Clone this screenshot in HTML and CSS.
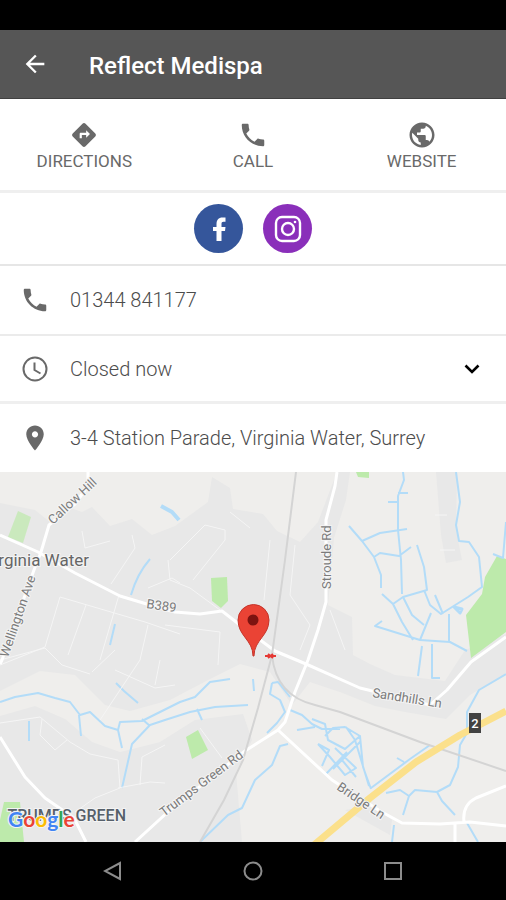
FILE: index.html
```html
<!DOCTYPE html>
<html lang="en">
<head>
    <meta charset="UTF-8">
    <meta name="viewport" content="width=device-width, initial-scale=1.0">
    <title>Reflect Medispa</title>
    <link rel="stylesheet" href="styles.css">
</head>
<body>
    <div class="statusbar"></div>
    <header class="toolbar">
        <button class="back" aria-label="Back">
            <svg width="28" height="28" viewBox="0 0 24 24" fill="currentColor"><path d="M20 11H7.83l5.59-5.59L12 4l-8 8 8 8 1.41-1.41L7.83 13H20v-2z"/></svg>
        </button>
        <h1>Reflect Medispa</h1>
    </header>
    <main>
        <nav class="actions">
            <a href="#map">
                <svg width="26" height="26" viewBox="0 0 24 24" fill="currentColor"><path d="M22.43 10.59l-9.01-9.01c-.75-.75-2.07-.76-2.83 0l-9 9c-.78.78-.78 2.04 0 2.82l9 9c.39.39.9.58 1.41.58.51 0 1.02-.19 1.41-.58l8.99-8.99c.79-.76.8-2.02.03-2.82zM14 14.5V12h-4v3H8v-4c0-.55.45-1 1-1h5V7.5l3.5 3.5-3.5 3.5z"/></svg>
                <span>DIRECTIONS</span>
            </a>
            <a href="tel:01344841177">
                <svg width="30" height="30" viewBox="0 0 24 24" fill="currentColor"><path d="M6.62 10.79c1.44 2.83 3.76 5.14 6.59 6.59l2.2-2.2c.27-.27.67-.36 1.02-.24 1.12.37 2.33.57 3.57.57.55 0 1 .45 1 1V20c0 .55-.45 1-1 1C10.61 21 3 13.39 3 4c0-.55.45-1 1-1h3.5c.55 0 1 .45 1 1 0 1.25.2 2.45.57 3.57.11.35.03.74-.25 1.02l-2.2 2.2z"/></svg>
                <span>CALL</span>
            </a>
            <a href="#website">
                <svg width="30" height="30" viewBox="0 0 24 24" fill="currentColor"><path d="M12 2C6.48 2 2 6.48 2 12s4.48 10 10 10 10-4.48 10-10S17.52 2 12 2zm-1 17.93c-3.95-.49-7-3.85-7-7.93 0-.62.08-1.21.21-1.79L9 15v1c0 1.1.9 2 2 2v1.93zm6.9-2.54c-.26-.81-1-1.39-1.9-1.39h-1v-3c0-.55-.45-1-1-1H8v-2h2c.55 0 1-.45 1-1V7h2c1.1 0 2-.9 2-2v-.41c2.93 1.19 5 4.06 5 7.41 0 2.08-.8 3.97-2.1 5.39z"/></svg>
                <span>WEBSITE</span>
            </a>
        </nav>
        <div class="social">
            <a href="#facebook" class="facebook" aria-label="Facebook">
                <svg width="26" height="26" viewBox="0 0 26 26" fill="#fff"><path d="M10.5 25V15H7v-4h3.5V8c0-4 2-6.5 6-6.5h3v4.3h-2c-1.5 0-2 .8-2 2.2v3h4l-.5 4h-3.5v10z"/></svg>
            </a>
            <a href="#instagram" class="instagram" aria-label="Instagram">
                <svg width="28" height="28" viewBox="0 0 28 28" fill="none" stroke="#fff" stroke-width="2.4"><rect x="2" y="2" width="24" height="24" rx="6"/><circle cx="14" cy="14" r="6"/><circle cx="21" cy="7" r="1.3" fill="#fff" stroke="none"/></svg>
            </a>
        </div>
        <a href="tel:01344841177" class="row">
            <svg width="30" height="30" viewBox="0 0 24 24" fill="currentColor"><path d="M6.62 10.79c1.44 2.83 3.76 5.14 6.59 6.59l2.2-2.2c.27-.27.67-.36 1.02-.24 1.12.37 2.33.57 3.57.57.55 0 1 .45 1 1V20c0 .55-.45 1-1 1C10.61 21 3 13.39 3 4c0-.55.45-1 1-1h3.5c.55 0 1 .45 1 1 0 1.25.2 2.45.57 3.57.11.35.03.74-.25 1.02l-2.2 2.2z"/></svg>
            <span>01344 841177</span>
        </a>
        <button class="row hours">
            <svg width="30" height="30" viewBox="0 0 30 30" fill="none" stroke="currentColor" stroke-width="2"><circle cx="15" cy="15" r="11.5"/><path d="M14.5 8.5V16l6 3.5"/></svg>
            <span>Closed now</span>
            <svg class="chevron" width="16" height="16" viewBox="0 0 16 16" fill="none" stroke="#000" stroke-width="2.6"><path d="M1.5 4.5L8 11l6.5-6.5"/></svg>
        </button>
        <a href="#map" class="row address">
            <svg width="30" height="30" viewBox="0 0 24 24" fill="currentColor"><path d="M12 2C8.13 2 5 5.13 5 9c0 5.25 7 13 7 13s7-7.75 7-13c0-3.87-3.13-7-7-7zm0 9.5c-1.38 0-2.5-1.12-2.5-2.5s1.12-2.5 2.5-2.5 2.5 1.12 2.5 2.5-1.12 2.5-2.5 2.5z"/></svg>
            <span>3-4 Station Parade, Virginia Water, Surrey</span>
        </a>
        <div class="map" id="map">
            <svg viewBox="0 472 506 370" preserveAspectRatio="xMidYMid slice">
                <!-- built up areas -->
                <g class="urban">
                    <path d="M0 503L35 510 50 522 68 507 82 512 92 507 110 526 132 519 152 535 175 526 208 502 212 477 230 488 233 509 263 514 277 531 300 542 318 522 337 472H350L346 500 334 538 328 605 352 617 353 655 370 664 395 675 445 681 465 650 506 634V673L470 695 446 719 405 712 375 706 340 692 310 682 292 705 270 672 240 664 212 678 170 700 130 711 105 705 75 675 40 671 0 691Z"/>
                    <path d="M0 716L35 706 65 719 92 742 120 752 160 742 195 720 243 714 252 740 236 772 242 842H0Z"/>
                    <path d="M436 472L457 472 456 530 462 560 446 563 441 535Z"/>
                    <path d="M345 810L372 805 392 820 390 835Z"/>
                </g>
                <g class="park">
                    <path d="M18 511L31 517 23 543 8 537Z" opacity=".7"/>
                    <path d="M211 578L227 577 228 601 221 608 212 601Z"/>
                    <path d="M356 472H369V478L358 477Z"/>
                    <path d="M497 556L506 559V632L471 658 466 615 482 594 485 577Z"/>
                    <path d="M186 737L198 730 208 750 192 759Z"/>
                    <path d="M4 802H20L24 842H0V820Z"/>
                </g>
                <g class="water">
                    <path d="M161 506L172 512 179 520" stroke-width="4"/>
                    <path d="M150 559Q137 574 131 595M115 624L110 645M116 683L124 691 138 703"/>
                    <path d="M0 702L15 697 38 693 55 698 70 702 80 715 90 712 105 726 118 730 122 748M79 715L81 736M29 721V741M118 730L120 722 142 721 180 702 195 697 210 682 230 679M122 788L132 744 150 725 165 720 190 712 215 707 248 705M197 709L202 720M142 719L150 726M253 679L254 691"/>
                    <path d="M272 683L278 682 290 697M272 683L270 694 280 700 285 712 277 723 267 733M288 744L280 746 272 765 255 780 242 808 228 815 200 842"/>
                    <path d="M403 472L404 480 398 496V530L401 560 402 594M388 502H398M398 493H408M349 526L362 541 374 557 381 575V588M362 541L380 533 407 529M374 557L380 553 399 556 411 547M417 545L424 567 427 590 403 597 393 604 382 594M393 604L402 622 413 640M403 597L412 615 424 625M424 590L430 605 441 614 468 597 482 587 479 557 469 542 459 541 456 525 460 502 456 472M435 595L443 614M431 613L420 640 375 626 382 621M420 640L450 642 467 651M449 614V642M422 646L418 676M432 644V678H440M506 522L503 558 493 554"/>
                    <path d="M290 710L302 715 312 724 322 729 340 729M297 730L315 727M312 719L325 724 328 740 345 749 360 736 345 727 333 728 325 736M318 744L329 750 322 766M318 744L330 757 345 775 356 768 335 748M333 769L360 742M360 736L363 767 371 789M346 727L355 740 362 763 369 786M325 775L347 752M342 760L356 777"/>
                    <path d="M371 788L410 759 430 745M397 758L404 762M386 793L400 790 409 796 415 790 437 792 450 785 458 767 460 745 467 733 467 712 479 690 506 674M409 796L403 815M437 792L442 801 455 815M467 823L478 842M394 825L392 842"/>
                    <path d="M454 607L462 609 460 613Z" stroke-width="3"/>
                </g>
                <g class="lane">
                    <path d="M60 597L145 622 180 634M60 597L45 647 0 665M86 605L68 655M119 595L100 660M148 625L140 660 100 720M82 531L85 548 110 541M111 584L135 548 132 535M148 588L172 578 180 583M168 560L170 580 190 588 220 610M193 580L225 540 225 530 205 525 170 560M230 512L250 528M270 540L264 600M0 660L45 648 62 665 90 674M92 672L115 650M115 670L155 688 175 685M155 685L160 660M165 625L220 632 218 665"/>
                    <path d="M0 723L40 717 70 742 90 754 118 760 120 788 95 798 75 812M42 719L40 735 55 750 67 740M118 788L150 782 165 783M165 745L142 757 140 785M200 728L222 758M295 545L290 595 310 625 300 650M330 610L345 650M435 515H447M440 550H455"/>
                </g>
                <g class="road">
                    <path d="M88 472V486L75 504 49 525 41 552 34 570 2 660 0 664"/>
                    <path d="M0 535L38 552 75 573 120 596 150 605 175 612 200 614 222 611 240 625 275 651 306 664 360 688 430 705 447 690 471 662 506 637"/>
                    <path d="M337 472L335 486 326 520V602L318 630 308 660 295 692 285 722 278 730 245 751 170 810 135 842"/>
                    <path d="M278 730L332 780 380 811 402 823 440 824 470 822 506 826M464 822Q462 805 476 798L506 786M455 824V842"/>
                    <path d="M0 737L25 777 45 798 74 818 86 842"/>
                </g>
                <g class="rail">
                    <path d="M296 472L285 560 272 655 258 708 243 760 224 800 200 842"/>
                    <path d="M272 655Q276 696 315 705L340 712 420 742 506 771"/>
                </g>
                <path class="highway" d="M314 845L370 798 416 762 460 735 506 711"/>
                <g class="label">
                    <text transform="translate(53 525) rotate(-43)">Callow Hill</text>
                    <text transform="translate(8 658) rotate(-71)">Wellington Ave</text>
                    <text transform="translate(146 608) rotate(8)">B389</text>
                    <text transform="translate(331 589) rotate(-90)">Stroude Rd</text>
                    <text transform="translate(372 697) rotate(9)">Sandhills Ln</text>
                    <text transform="translate(164 817) rotate(-37)">Trumps Green Rd</text>
                    <text transform="translate(336 789) rotate(34)">Bridge Ln</text>
                </g>
                <text class="town" x="89" y="566" text-anchor="end">Virginia Water</text>
                <text class="district" x="126" y="821" text-anchor="end">TRUMPS GREEN</text>
                <path d="M469 713H481V733H469Z" fill="#424242"/>
                <text class="shield" x="475" y="728" text-anchor="middle">2</text>
                <path d="M265 656H276M268 654L273 658M273 654L268 658" stroke="#e53935" stroke-width="2"/>
                <path d="M253 656C253 640 238 636 238 620A15 15 0 0 1 269 620C269 636 254 640 254 656Z" fill="#ea4335" stroke="#c5352b" stroke-width="1"/>
                <circle cx="253" cy="620" r="5.5" fill="#7d1310"/>
                <text class="google" x="8" y="827"><tspan fill="#4285f4">G</tspan><tspan fill="#ea4335">o</tspan><tspan fill="#fbbc05">o</tspan><tspan fill="#4285f4">g</tspan><tspan fill="#34a853">l</tspan><tspan fill="#ea4335">e</tspan></text>
            </svg>
        </div>
    </main>
    <footer class="navbar">
        <button aria-label="Back"><svg width="20" height="20" viewBox="0 0 20 20"><path d="M17 2V18L2 10Z"/></svg></button>
        <button aria-label="Home"><svg width="20" height="20" viewBox="0 0 20 20"><circle cx="10" cy="10" r="8.5"/></svg></button>
        <button aria-label="Recent apps"><svg width="20" height="20" viewBox="0 0 20 20"><rect x="2" y="2" width="16" height="16"/></svg></button>
    </footer>
</body>
</html>
```
FILE: styles.css
```css
*{
    box-sizing: border-box;
}
body{
    margin: 0;
    min-height: 100vh;
    display: flex;
    flex-direction: column;
    font-family: Roboto, "Liberation Sans", sans-serif;
    color: #696969;
    background: #fff;
}
button{
    padding: 0;
    border: 0;
    background: none;
    font: inherit;
    color: inherit;
    cursor: pointer;
}
a{
    color: inherit;
    text-decoration: none;
}
svg{
    display: block;
    flex-shrink: 0;
}
.statusbar{
    height: 30px;
    background: #000;
}
.toolbar{
    height: 69px;
    padding: 0 21px;
    display: flex;
    align-items: center;
    gap: 40px;
    background: #565656;
    border-bottom: 1px solid #404040;
    color: #fff;
}
.toolbar h1{
    margin: 0;
    padding-top: 4px;
    font-size: 24px;
    font-weight: 500;
}
main{
    flex: 1;
    display: flex;
    flex-direction: column;
}
.actions{
    height: 94px;
    padding-top: 2px;
    display: grid;
    grid-template-columns: repeat(3, 1fr);
    border-bottom: 3px solid #efefef;
}
.actions a{
    display: flex;
    flex-direction: column;
    align-items: center;
    justify-content: center;
    font-size: 17px;
    line-height: 22px;
}
.actions svg{
    height: 30px;
}
.social{
    height: 73px;
    display: flex;
    align-items: center;
    justify-content: center;
    gap: 20px;
    border-bottom: 2px solid #e6e6e6;
}
.social a{
    width: 49px;
    height: 49px;
    display: flex;
    align-items: center;
    justify-content: center;
    border-radius: 50%;
}
.facebook{
    background: #35569b;
}
.instagram{
    background: #8a2fba;
}
.row{
    height: 70px;
    padding: 0 26px 0 20px;
    display: flex;
    align-items: center;
    gap: 20px;
    border-bottom: 2px solid #ebebeb;
    font-size: 20px;
    font-weight: 300;
    text-align: left;
}
.row span{
    color: #4c4c4c;
}
.hours{
    height: 68px;
    border-bottom: 3px solid #efefef;
}
.address{
    height: 68px;
    border-bottom: 0;
}
.chevron{
    margin-left: auto;
}
.map{
    flex: 1;
    min-height: 370px;
    position: relative;
    overflow: hidden;
    background: #efeeec;
}
.map svg{
    position: absolute;
    width: 100%;
    height: 100%;
}
.urban{
    fill: #e8e8e8;
}
.park{
    fill: #bdeaab;
}
.water, .lane, .road, .rail, .highway{
    fill: none;
    stroke-linejoin: round;
}
.water{
    stroke: #b3dcf8;
    stroke-width: 2;
}
.lane{
    stroke: #f5f5f5;
    stroke-width: 1;
}
.road{
    stroke: #fff;
    stroke-width: 3;
}
.rail{
    stroke: #d4d4d4;
    stroke-width: 2;
}
.highway{
    stroke: #fbe08b;
    stroke-width: 7;
}
.label text, .town, .district, .google{
    stroke: #f4f4f4;
    stroke-width: 2;
    paint-order: stroke;
}
.label{
    font-size: 13px;
    fill: #7b7b7b;
}
.town{
    font-size: 17px;
    fill: #666;
}
.district{
    font-size: 16px;
    font-weight: 500;
    fill: #56606a;
}
.shield{
    font-size: 13px;
    font-weight: 500;
    fill: #fff;
}
.google{
    font-family: Lato, sans-serif;
    font-size: 21px;
    font-weight: 700;
}
.navbar{
    height: 58px;
    padding: 0 43px;
    display: grid;
    grid-template-columns: repeat(3, 1fr);
    background: #000;
}
.navbar button{
    display: flex;
    align-items: center;
    justify-content: center;
}
.navbar svg{
    fill: none;
    stroke: #8c8c8c;
    stroke-width: 2;
}
```
